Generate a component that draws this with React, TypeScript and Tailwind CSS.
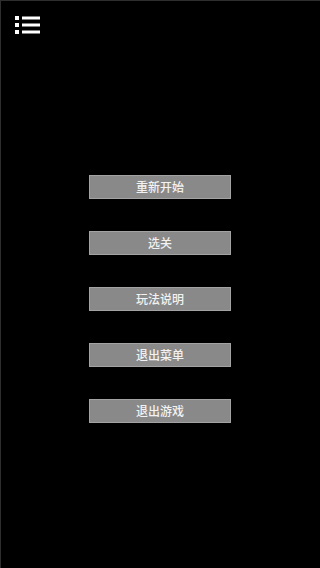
import React from 'react';

const items = ['重新开始', '选关', '玩法说明', '退出菜单', '退出游戏'];

const MenuIcon: React.FC = () => (
  <svg width="26" height="20" viewBox="0 0 26 20" className="block">
    <rect x="0" y="1" width="4" height="4" fill="#fff" />
    <rect x="7" y="1.5" width="18" height="3" fill="#fff" />
    <rect x="0" y="8" width="4" height="4" fill="#fff" />
    <rect x="7" y="8.5" width="18" height="3" fill="#fff" />
    <rect x="0" y="15" width="4" height="4" fill="#fff" />
    <rect x="7" y="15.5" width="18" height="3" fill="#fff" />
  </svg>
);

const App: React.FC = () => {
  return (
    <div
      className="w-[320px] h-[568px] bg-black border-l border-t border-[#2e2e2e] flex flex-col"
      style={{ fontFamily: '"Noto Sans CJK SC", "Noto Sans", sans-serif' }}
    >
      <div className="pl-[14px] pt-[14px]">
        <MenuIcon />
      </div>
      <div className="flex flex-col items-start gap-8 mt-[140px] pl-[88px]">
        {items.map((label) => (
          <button
            key={label}
            className="w-[142px] h-[24px] bg-[#898989] border border-[#a3a3a3] text-[#f2f2f2] text-[12px] font-medium leading-none flex items-center justify-center"
          >
            {label}
          </button>
        ))}
      </div>
    </div>
  );
};

export default App;
